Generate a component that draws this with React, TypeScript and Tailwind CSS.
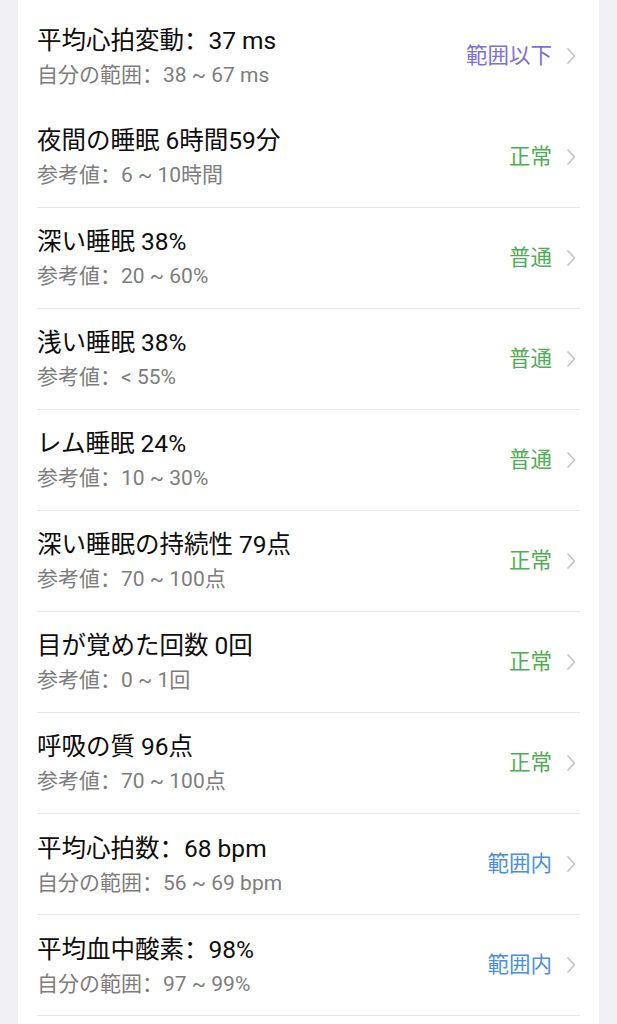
import React from "react";

const PURPLE = "text-[#7b6fe2]";
const GREEN = "text-[#4fae55]";
const BLUE = "text-[#4a8fe2]";

const rows: { t: [string, string, string]; s: [string, string]; status: string; color: string }[] = [
  { t: ["平均心拍変動", "：", "37 ms"], s: ["自分の範囲", "38 ~ 67 ms"], status: "範囲以下", color: PURPLE },
  { t: ["夜間の睡眠 6時間59分", "", ""], s: ["参考値", "6 ~ 10時間"], status: "正常", color: GREEN },
  { t: ["深い睡眠 38%", "", ""], s: ["参考値", "20 ~ 60%"], status: "普通", color: GREEN },
  { t: ["浅い睡眠 38%", "", ""], s: ["参考値", "< 55%"], status: "普通", color: GREEN },
  { t: ["レム睡眠 24%", "", ""], s: ["参考値", "10 ~ 30%"], status: "普通", color: GREEN },
  { t: ["深い睡眠の持続性 79点", "", ""], s: ["参考値", "70 ~ 100点"], status: "正常", color: GREEN },
  { t: ["目が覚めた回数 0回", "", ""], s: ["参考値", "0 ~ 1回"], status: "正常", color: GREEN },
  { t: ["呼吸の質 96点", "", ""], s: ["参考値", "70 ~ 100点"], status: "正常", color: GREEN },
  { t: ["平均心拍数", "：", "68 bpm"], s: ["自分の範囲", "56 ~ 69 bpm"], status: "範囲内", color: BLUE },
  { t: ["平均血中酸素", "：", "98%"], s: ["自分の範囲", "97 ~ 99%"], status: "範囲内", color: BLUE },
];

const colonFont = { fontFamily: '"Noto Sans CJK SC", sans-serif' };

function Chevron() {
  return (
    <svg width="10" height="18" viewBox="0 0 10 18" fill="none" className="shrink-0">
      <path d="M2 2 L8.5 9 L2 16" stroke="#c4c4c4" strokeWidth="1.7" strokeLinecap="round" strokeLinejoin="round" />
    </svg>
  );
}

export default function App() {
  return (
    <div
      className="min-h-[1024px] w-full bg-[#f1f1f5] px-[18px]"
      style={{ fontFamily: '"Roboto", "Noto Sans CJK JP", sans-serif' }}
    >
      <div className="min-h-[1024px] bg-white px-[19px] pt-[6px]">
        {rows.map((r, i) => (
          <div
            key={i}
            className={
              i === 0
                ? "flex h-[100px] items-center justify-between"
                : i === 1
                ? "flex h-[101px] items-center justify-between border-t border-transparent"
                : "flex h-[101px] items-center justify-between border-t border-[#e9e9e9]"
            }
          >
            <div className="flex flex-col">
              <div className="text-[24.5px] leading-[32px] text-[#0d0d0d]">
                {r.t[0]}
                {r.t[1] && <span style={colonFont}>{r.t[1]}</span>}
                {r.t[2]}
              </div>
              <div className="mt-[2px] text-[21px] leading-[28px] text-[#7d7d7d]">
                {r.s[0]}
                <span style={colonFont}>：</span>
                {r.s[1]}
              </div>
            </div>
            <div className="flex items-center gap-[14px] pr-[4px]">
              <span className={`text-[21.5px] leading-[28px] ${r.color}`}>{r.status}</span>
              <Chevron />
            </div>
          </div>
        ))}
        <div className="border-t border-[#e9e9e9]" />
      </div>
    </div>
  );
}
